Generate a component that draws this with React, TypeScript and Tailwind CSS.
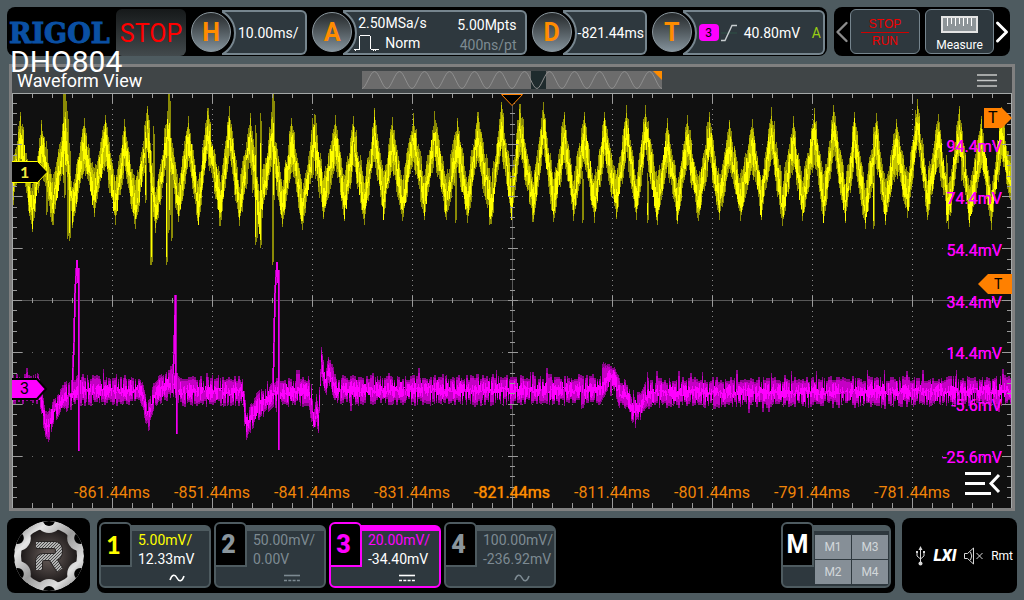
import React, { useState } from "react";
import clsx from "clsx";
import { LuChevronLeft, LuChevronRight } from "react-icons/lu";

type Point = [number, number];
type Span = [number, number, number];

const PLOT_W = 1000;
const PLOT_H = 415;
const DIV_Y = PLOT_H / 8;

const timeLabels = [
  "-861.44ms",
  "-851.44ms",
  "-841.44ms",
  "-831.44ms",
  "-821.44ms",
  "-811.44ms",
  "-801.44ms",
  "-791.44ms",
  "-781.44ms",
];

const voltLabels = [
  "94.4mV",
  "74.4mV",
  "54.4mV",
  "34.4mV",
  "14.4mV",
  "-5.6mV",
  "-25.6mV",
];

// turning points of channel 1: crest, trough, crest, ...
const ch1Turns: Point[] = [
  [0, 117], [8, 19], [20, 139], [29, 27], [40, 132], [53, 17], [60, 135],
  [72, 25], [82, 124], [93, 22], [103, 132], [112, 26], [123, 136], [135, 13],
  [143, 140], [155, 18], [166, 129], [176, 23], [186, 132], [195, 15],
  [208, 133], [217, 13], [227, 133], [238, 20], [247, 140], [260, 19],
  [270, 134], [279, 25], [290, 137], [302, 21], [311, 126], [323, 22],
  [332, 128], [341, 23], [352, 132], [362, 15], [371, 127], [380, 24],
  [390, 128], [401, 20], [412, 127], [422, 18], [434, 127], [445, 25],
  [455, 130], [465, 19], [479, 131], [489, 9], [499, 127], [507, 11],
  [521, 129], [531, 9], [541, 129], [552, 19], [561, 128], [572, 19],
  [582, 130], [592, 19], [604, 126], [614, 12], [624, 127], [633, 12],
  [645, 132], [655, 25], [665, 131], [675, 22], [686, 128], [697, 19],
  [707, 127], [717, 27], [728, 128], [740, 26], [749, 127], [759, 14],
  [770, 133], [781, 23], [790, 128], [802, 15], [811, 130], [821, 12],
  [833, 130], [842, 19], [853, 136], [864, 20], [873, 132], [884, 26],
  [895, 125], [905, 6], [915, 127], [926, 21], [936, 136], [947, 13],
  [957, 134], [969, 23], [979, 137], [989, 14], [1000, 122],
];

// narrow bursts on top of channel 1
const ch1Bursts: Span[] = [
  [51, 0, 90], [52, 0, 105], [53, 0, 80], [55, 18, 146], [57, 50, 148],
  [34, 48, 122], [133, 42, 110], [138, 50, 172], [139, 70, 172],
  [141, 33, 120], [154, 60, 172], [156, 0, 140], [157, 0, 125],
  [159, 70, 148], [212, 60, 98], [240, 38, 100], [243, 32, 152],
  [244, 90, 148], [248, 20, 155], [260, 0, 172], [261, 0, 110],
  [300, 25, 85], [303, 22, 86], [443, 70, 130], [477, 75, 132],
  [570, 78, 130], [635, 80, 130], [801, 28, 75], [861, 60, 136],
  [949, 30, 88], [934, 62, 130],
];

const ch3Center: Point[] = [
  [0, 297], [26, 295], [29, 308], [33, 332], [36, 334], [42, 317], [50, 306],
  [58, 301], [66, 297], [128, 297], [131, 306], [134, 320], [138, 316],
  [142, 302], [150, 294], [160, 290], [168, 298], [228, 298], [231, 304],
  [234, 332], [238, 325], [246, 313], [256, 305], [262, 300], [296, 298],
  [299, 310], [302, 330], [304, 316], [306, 330], [308, 290], [309, 268],
  [312, 285], [314, 289], [316, 276], [319, 286], [322, 297], [588, 297],
  [595, 285], [601, 286], [607, 300], [615, 303], [620, 318], [628, 312],
  [636, 300], [1000, 298],
];

const ch3Spikes = [
  "M60 300L62 250L63 200L65 167V190M66.5 175V358",
  "M160 300L162 262L163.5 202V300M164.5 280V341",
  "M261 300L262 250L263 200L265 169V190M266.5 177V357",
];

const noise = (n: number) => {
  const v = Math.sin(n * 127.1 + 11.7) * 43758.5453;
  return v - Math.floor(v);
};

const bar = (x: number, a: number, b: number) =>
  `M${x + 0.5} ${a.toFixed(1)}V${b.toFixed(1)}`;

const buildCh1 = () => {
  const dim: string[] = [];
  const mid: string[] = [];
  const hot: string[] = [];
  let k = 0;
  for (let x = 0; x < PLOT_W; x++) {
    while (k < ch1Turns.length - 2 && x >= ch1Turns[k + 1][0]) k++;
    const [xa, ya] = ch1Turns[k];
    const [xb, yb] = ch1Turns[k + 1];
    const ca = ya < 80 ? ya + 22 : ya - 19;
    const cb = yb < 80 ? yb + 22 : yb - 19;
    const t = (x - xa) / (xb - xa);
    const c = ca + (cb - ca) * t;
    // 0 on a crest, 1 in a trough
    const depth = ya < 80 ? t : 1 - t;
    const nearest = t < 0.5 ? ya : yb;
    const edge = Math.min(t, 1 - t);
    let up = 18 + depth * 13 - noise((x >> 1) + 20) * 12;
    let down = 34 - depth * 13 - noise((x >> 1) + 900) * 12;
    if (edge < 0.3) {
      // the band fills out towards each turning point
      const reach = edge < 0.08 ? 0 : 3 + edge * 40 + noise(x >> 1) * 8;
      if (nearest < 80) up = Math.max(up, c - nearest - reach);
      else down = Math.max(down, nearest - c - reach);
      if (nearest < 80) up = Math.min(up, c - nearest);
      else down = Math.min(down, nearest - c);
    }
    dim.push(bar(x, c - up, c + down));
    if (noise(x + 40) > 0.1) {
      const cut = 2 + noise(x + 70) * 8;
      mid.push(bar(x, c - up + cut, c + down - cut));
    }
    const shift = (noise(x + 500) - 0.5) * 14 + 2;
    const core = 2 + noise(x + 300) * 11;
    hot.push(bar(x, c + shift - core, c + shift + core));
  }
  ch1Bursts.forEach(([x, a, b], i) => {
    dim.push(`M${x} ${a}V${b}`, `M${x + 1} ${a + 8}V${b - 3}`);
    if (i % 2 === 0) hot.push(`M${x + 0.5} ${a + 30}V${b - 8}`);
  });
  return { dim: dim.join(""), mid: mid.join(""), hot: hot.join("") };
};

const buildCh3 = () => {
  const dim: string[] = [];
  const mid: string[] = [];
  const hot: string[] = [];
  let k = 0;
  for (let x = 0; x < PLOT_W; x++) {
    while (k < ch3Center.length - 2 && x >= ch3Center[k + 1][0]) k++;
    const [xa, ya] = ch3Center[k];
    const [xb, yb] = ch3Center[k + 1];
    const c = ya + ((yb - ya) * (x - xa)) / (xb - xa);
    const pick = noise(x + 150);
    let up = 10 + noise((x >> 1) + 77) * 6;
    let down = 9 + noise((x >> 1) + 400) * 7;
    if (noise((x >> 1) + 50) > 0.92) up += 7;
    if (noise((x >> 1) + 61) > 0.94) down += 5;
    // quiet columns leave gaps on one side of the band
    if (pick < 0.16) up = 1;
    else if (pick > 0.84) down = 2;
    dim.push(bar(x, c - up, c + down));
    mid.push(bar(x, c - up * 0.8, c + down * 0.8));
    const core = noise(x + 600) * 8;
    const shift = (noise(x + 830) - 0.5) * 6;
    hot.push(bar(x, c + shift - core, c + shift + core));
  }
  return { dim: dim.join(""), mid: mid.join(""), hot: hot.join("") };
};

const buildGrid = () => {
  const ticks: string[] = [];
  for (let x = 20; x < PLOT_W; x += 20) {
    const len = x % 100 === 0 ? 10 : 5;
    ticks.push(
      `M${x + 0.5} 0v${len}`,
      `M${x + 0.5} ${PLOT_H}v${-len}`,
      `M${x + 0.5} ${207.5 - len / 2}v${len}`
    );
  }
  for (let i = 1; i < 40; i++) {
    const y = Math.floor((i * DIV_Y) / 5) + 0.5;
    const len = i % 5 === 0 ? 10 : 5;
    ticks.push(
      `M0 ${y}h${len}`,
      `M${PLOT_W} ${y}h${-len}`,
      `M${500.5 - len / 2} ${y}h${len}`
    );
  }
  return ticks.join("");
};

const ch1 = buildCh1();
const ch3 = buildCh3();
const gridTicks = buildGrid();

const Graticule = () => (
  <svg
    className="absolute inset-0 h-full w-full"
    viewBox={`0 0 ${PLOT_W} ${PLOT_H}`}
    preserveAspectRatio="none"
    shapeRendering="crispEdges"
    fill="none"
  >
    {[1, 2, 3, 4, 6, 7, 8, 9].map((i) => (
      <path
        key={`v${i}`}
        d={`M${i * 100 + 0.5} 0V${PLOT_H}`}
        stroke="#8a8a8a"
        strokeDasharray={`1 ${DIV_Y / 10 - 1}`}
      />
    ))}
    {[1, 2, 3, 5, 6, 7].map((i) => (
      <path
        key={`h${i}`}
        d={`M0 ${Math.floor(i * DIV_Y) + 0.5}H${PLOT_W}`}
        stroke="#6c6c6c"
        strokeDasharray="1 9"
      />
    ))}
    <path d={`M0 207.5H${PLOT_W}M500.5 0V${PLOT_H}`} stroke="#585858" />
    <path d={ch1.dim} stroke="#8a8a06" />
    <path d={ch1.mid} stroke="#c6c600" />
    <path d={ch1.hot} stroke="#ffff00" />
    <path d={ch3.dim} stroke="#8a068a" />
    <path d={ch3.mid} stroke="#c400c4" />
    <path d={ch3.hot} stroke="#ff00ff" />
    {ch3Spikes.map((d) => (
      <g key={d}>
        <path d={d} stroke="#b000b0" strokeWidth="2" />
        <path d={d} stroke="#f000f0" />
      </g>
    ))}
    <path d={gridTicks} stroke="#9a9a9a" />
    <path d="M0 0.5H1000M0.5 0V415M999.5 0V415" stroke="#a4a8a8" />
  </svg>
);

interface ReadoutProps {
  letter: string;
  label: string;
  className: string;
  children: React.ReactNode;
}

const Readout = ({ letter, label, className, children }: ReadoutProps) => (
  <button
    aria-label={label}
    className={clsx("flex min-w-0 items-center pt-px text-left", className)}
  >
    <span className="z-10 -mr-[9px] flex size-10 shrink-0 items-center justify-center rounded-full border border-[#8b979e] bg-linear-to-b from-[#262a2c] to-[#84929b] pt-[2px] text-[25px] font-bold text-[#ff8c00]">
      {letter}
    </span>
    <span className="relative flex h-[45px] min-w-0 flex-1 items-center overflow-hidden rounded-r-md border-2 border-l-0 border-[#76858e] bg-[#2e383e]">
      <span className="absolute -left-9 -top-1 size-[50px] rounded-full border-2 border-[#76858e] bg-black" />
      {children}
    </span>
  </button>
);

const Coupling = ({ type }: { type: string }) =>
  type === "AC" ? (
    <svg width="16" height="8" viewBox="0 0 16 8" fill="none">
      <path
        d="M1 6C3 0 6 0 8 4S13 8 15 2"
        stroke="currentColor"
        strokeWidth="1.6"
      />
    </svg>
  ) : (
    <svg width="16" height="8" viewBox="0 0 16 8" fill="none">
      <path d="M0 1.5h16" stroke="currentColor" strokeWidth="1.6" />
      <path
        d="M0 6.5h16"
        stroke="currentColor"
        strokeWidth="1.6"
        strokeDasharray="3 1.3"
      />
    </svg>
  );

const channels = [
  { id: 1, scale: "5.00mV/", offset: "12.33mV", coupling: "AC", on: true },
  { id: 2, scale: "50.00mV/", offset: "0.00V", coupling: "DC", on: false },
  { id: 3, scale: "20.00mV/", offset: "-34.40mV", coupling: "DC", on: true },
  { id: 4, scale: "100.00mV/", offset: "-236.92mV", coupling: "AC", on: false },
];

const RigolGear = () => (
  <svg width="70" height="70" viewBox="-35 -35 70 70">
    <defs>
      <linearGradient
        id="metal"
        gradientUnits="userSpaceOnUse"
        x1="-30"
        y1="-30"
        x2="30"
        y2="30"
      >
        <stop offset="0" stopColor="#8e8e8e" />
        <stop offset="0.2" stopColor="#e6e6e6" />
        <stop offset="0.5" stopColor="#9a9a9a" />
        <stop offset="0.8" stopColor="#e0e0e0" />
        <stop offset="1" stopColor="#8c8c8c" />
      </linearGradient>
      <radialGradient id="core">
        <stop offset="0" stopColor="#6a5f5c" />
        <stop offset="1" stopColor="#1e1a1a" />
      </radialGradient>
      <pattern id="mesh" width="3" height="3" patternUnits="userSpaceOnUse">
        <rect width="3" height="3" fill="#b4b4b4" />
        <path d="M0 3L3 0" stroke="#4a4a4a" />
      </pattern>
      <clipPath id="disc">
        <circle r="35" />
      </clipPath>
    </defs>
    <g clipPath="url(#disc)">
      <circle r="35" fill="url(#metal)" />
      <circle r="28" fill="url(#core)" />
      {[30, 90, 150, 210, 270, 330].map((a) => {
        const r = (a * Math.PI) / 180;
        const cx = 36 * Math.cos(r);
        const cy = 36 * Math.sin(r);
        return (
          <g key={a}>
            <circle cx={cx} cy={cy} r="13" fill="url(#metal)" />
            <circle cx={cx} cy={cy} r="6" fill="#000" />
          </g>
        );
      })}
    </g>
    <path
      d="M-13 -11H5Q10 -11 10 -5Q10 1 5 1H-5Q-10 1 -10 6V14M3 2L11 14"
      fill="none"
      stroke="#2a2626"
      strokeWidth="8"
    />
    <path
      d="M-13 -11H5Q10 -11 10 -5Q10 1 5 1H-5Q-10 1 -10 6V14M3 2L11 14"
      fill="none"
      stroke="url(#mesh)"
      strokeWidth="6"
    />
  </svg>
);

const App = () => {
  const [selected, setselected] = useState(3);

  return (
    <div className="flex min-h-screen flex-col bg-[#4e5b60] px-[7px] py-[7px] font-[Roboto,sans-serif] text-white">
      <header className="mr-[7px] flex gap-[7px]">
        <div className="relative flex h-[49px] min-w-0 flex-1 items-center gap-[5px] rounded-lg bg-black pl-[2px] pr-[2px]">
          <h1 className="w-[102px] shrink-0 pt-1 font-['DejaVu_Serif',serif] text-[27px] font-bold leading-none text-[#0a50a4] [-webkit-text-stroke:1px_#0a50a4]">
            RIGOL
          </h1>
          <p className="absolute left-[3px] top-[39px] z-20 text-[30px] leading-8">
            DHO804
          </p>
          <button className="mt-[2px] h-[47px] w-[70px] shrink-0 rounded-md bg-linear-to-b from-[#16191a] to-[#434a4d] pt-[2px] text-[25px] text-[#ff0000]">
            STOP
          </button>

          <Readout
            letter="H"
            label="Horizontal"
            className="flex-[116_1_116px]"
          >
            <span className="pl-4 pt-px text-sm">10.00ms/</span>
          </Readout>

          <Readout
            letter="A"
            label="Acquire"
            className="flex-[214_1_214px]"
          >
            <span className="relative flex h-full flex-1 justify-between pl-2 pr-2 text-sm leading-5">
              <span className="pt-px">
                <span className="block pl-[7px]">2.50MSa/s</span>
                <span className="flex items-center gap-[6px]">
                  <svg
                    width="28"
                    height="16"
                    viewBox="0 0 28 16"
                    fill="none"
                    stroke="#fff"
                    shapeRendering="crispEdges"
                  >
                    <path d="M3 14.5h6M8.5 14V1M9 0.5h10M19.5 1V14M20 14.5h8" />
                    <path d="M4 15.5h2M22 15.5h3" strokeDasharray="1 1" />
                  </svg>
                  Norm
                </span>
              </span>
              <span className="pt-[3px] text-right">
                <span className="block">5.00Mpts</span>
                <span className="block text-[#7d8a92]">400ns/pt</span>
              </span>
            </span>
          </Readout>

          <Readout letter="D" label="Delay" className="flex-[115_1_115px]">
            <span className="relative pl-[15px] pt-px text-sm">-821.44ms</span>
          </Readout>

          <Readout letter="T" label="Trigger" className="flex-[173_1_173px]">
            <span className="relative flex flex-1 items-center pl-4 pr-[2px] pt-px text-sm">
              <span className="flex h-[17px] w-5 items-center justify-center rounded bg-[#ff00ff] text-xs text-black">
                3
              </span>
              <svg
                className="ml-[2px]"
                width="16"
                height="18"
                viewBox="0 0 16 18"
                fill="none"
              >
                <path d="M0 9h16" stroke="#2d5045" />
                <path d="M0 16.5H4L11 1.5H16" stroke="#c8cdd0" strokeWidth="1.4" />
              </svg>
              <span className="ml-[7px]">40.80mV</span>
              <span className="ml-auto text-[#9acd14]">A</span>
            </span>
          </Readout>
        </div>

        <div className="flex h-[49px] w-44 shrink-0 items-center gap-[5px] rounded-lg bg-black">
          <button aria-label="Previous" className="-mr-[5px] w-4 text-[#8c8c8c]">
            <LuChevronLeft
              className="-ml-1 size-6"
              viewBox="4 4 16 16"
              strokeWidth={1.6}
            />
          </button>
          <button className="h-[45px] w-[70px] rounded-md border border-[#76858e] bg-[#2e383e] pt-[2px] font-['Liberation_Sans',sans-serif] text-xs text-[#f00000]">
            <span className="block leading-4">STOP</span>
            <span className="mx-[10px] block h-px bg-[#d00000]" />
            <span className="block leading-4">RUN</span>
          </button>
          <button className="flex h-[45px] w-[69px] flex-col items-center justify-end gap-1 rounded-md border border-[#76858e] bg-[#2e383e] text-xs leading-4">
            <svg width="37" height="17" viewBox="0 0 37 17" fill="none">
              <path
                d="M1 1H36V16H1Z"
                fill="#8d9498"
                stroke="#e4e4e4"
                strokeWidth="2"
              />
              <path
                d="M6.5 2v8M10.5 2v6M14.5 2v8M18.5 2v6M22.5 2v8M26.5 2v6M30.5 2v8"
                stroke="#fff"
              />
            </svg>
            Measure
          </button>
          <button aria-label="Next" className="-ml-[5px] w-4">
            <LuChevronRight className="-ml-1 size-6" viewBox="4 4 16 16" />
          </button>
        </div>
      </header>

      <main className="mx-[2px] mt-2 flex flex-1 flex-col border-[3px] border-[#808080]">
        <div className="grid h-[26px] grid-cols-[1fr_auto_1fr] items-center bg-[#404547]">
          <h2 className="pl-[5px] pt-[2px] text-lg leading-5">Waveform View</h2>
          <svg width="300" height="18" viewBox="0 0 300 18" fill="none">
            <path d="M0 0H300V18H0Z" fill="#6c6c6c" />
            <path d="M169 0H184V18H169Z" fill="#1f2b2d" />
            <path
              d={Array.from(
                { length: 12 },
                (_, i) => `M${i * 25} 17.5c4 0 8 -17 12.5 -17s8 17 12.5 17`
              ).join("")}
              stroke="#8f8f8f"
            />
            <path d="M291 0H300V9Z" fill="#ff8c00" />
          </svg>
          <button aria-label="View menu" className="mr-[15px] justify-self-end">
            <svg width="20" height="14" viewBox="0 0 20 14" fill="none">
              <path d="M0 2h20M0 7.5h20M0 13h20" stroke="#c6c8c8" strokeWidth="1.5" />
            </svg>
          </button>
        </div>

        <div className="relative min-h-[320px] flex-1 bg-[#101010]">
          <Graticule />

          {/* trigger position */}
          <svg
            className="absolute left-1/2 top-0 -translate-x-1/2"
            width="24"
            height="14"
            viewBox="0 0 24 14"
          >
            <path d="M1.5 1.5H22.5L12 12.5Z" fill="#000" stroke="#ff8000" />
          </svg>

          {/* channel ground markers */}
          <div className="absolute left-0 top-[19%] h-[22px] w-9 -translate-y-1/2">
            <svg className="absolute inset-0" width="36" height="22" viewBox="0 0 36 22">
              <path d="M0 0.5H25.5L35.5 11L25.5 21.5H0" fill="#000" stroke="#ffff00" />
            </svg>
            <span className="relative block pl-2 font-[Lato,sans-serif] text-base font-bold leading-[22px] text-[#f0e83c]">
              1
            </span>
          </div>
          <div className="absolute left-0 top-[71%] h-6 w-9 -translate-y-1/2">
            <svg className="absolute inset-0" width="36" height="24" viewBox="0 0 36 24">
              <path d="M0 3H25L34 13L25 23H0" fill="#ff00ff" stroke="#000" strokeWidth="2" />
            </svg>
            <span className="relative block pl-2 pt-[2px] text-base leading-[22px] text-black">
              3
            </span>
          </div>

          <div className="absolute inset-y-0 right-[10px] flex flex-col pb-6 pt-7 text-right text-base text-[#ff00ff] [text-shadow:0_0_0_currentColor]">
            {voltLabels.map((label) => (
              <span key={label} className="flex flex-1 items-center justify-end">
                {label}
              </span>
            ))}
          </div>

          {/* trigger markers on the right edge */}
          <div className="absolute right-0 top-[6%] h-5 w-7 -translate-y-1/2">
            <svg className="absolute inset-0" width="28" height="20" viewBox="0 0 28 20">
              <path d="M0 0H18L28 10L18 20H0Z" fill="#ff8000" />
            </svg>
            <span className="relative block pl-1 text-base leading-5 text-black">
              T
            </span>
          </div>
          <div className="absolute right-0 top-[46%] h-5 w-[34px] -translate-y-1/2">
            <svg className="absolute inset-0" width="34" height="20" viewBox="0 0 34 20">
              <path d="M34 0H10L0 10L10 20H34Z" fill="#ff8000" />
            </svg>
            <span className="relative block pl-4 text-sm leading-5 text-black">
              T
            </span>
          </div>

          <div className="absolute inset-x-0 bottom-1 grid grid-cols-9 px-[5%] text-center text-base leading-[22px] text-[#f08408]">
            {timeLabels.map((label, i) => (
              <span
                key={label}
                className={clsx(
                  i === 4 && "text-[#ff8c00] [text-shadow:0_0_1px_currentColor]"
                )}
              >
                {label}
              </span>
            ))}
          </div>

          <button aria-label="Expand list" className="absolute bottom-3 right-[11px]">
            <svg width="36" height="25" viewBox="0 0 36 25" fill="none" stroke="#fff">
              <path d="M0 2.5h26M0 12.5h20M0 22.5h26" strokeWidth="3" />
              <path d="M34 4L26 12.5L34 21" strokeWidth="3" />
            </svg>
          </button>
        </div>
      </main>

      <footer className="mt-[7px] flex h-[75px] gap-[7px]">
        <button
          aria-label="Main menu"
          className="flex w-[83px] shrink-0 items-center justify-center rounded-lg bg-black"
        >
          <RigolGear />
        </button>

        <div className="flex min-w-0 flex-1 gap-[3px] rounded-lg bg-black pb-[5px] pl-[2px] pr-1 pt-[7px]">
          {channels.map((ch) => {
            const active = selected === ch.id;
            return (
              <button
                key={ch.id}
                aria-pressed={active}
                onClick={() => setselected(ch.id)}
                className={clsx(
                  "relative w-28 rounded-md border-2 border-t-[6px] bg-[#2e383e] pl-[37px] text-left text-sm leading-[19px]",
                  active ? "border-[#ff00ff]" : "border-[#4e5b60]",
                  !ch.on && "text-[#7d8a92]"
                )}
              >
                <span
                  className={clsx(
                    "absolute -left-[2px] -top-[9px] flex h-[45px] w-[33px] items-center justify-center rounded-t-md border-2 bg-black pr-1 text-[25px] font-black",
                    active ? "border-[#ff00ff]" : "border-[#4e5b60]",
                    ch.id === 1 && "font-[Lato,sans-serif] text-[#ffff00]",
                    ch.id === 3 && "text-[#ff00ff]",
                    !ch.on && "text-[#8a959c]"
                  )}
                >
                  {ch.id}
                </span>
                <span
                  className={clsx(
                    "block",
                    ch.id === 1 && "text-[#ffff00]",
                    ch.id === 3 && "text-[#ff00ff]"
                  )}
                >
                  {ch.scale}
                </span>
                <span className="block">{ch.offset}</span>
                <span className="flex h-[17px] items-center pl-[31px]">
                  <Coupling type={ch.coupling} />
                </span>
              </button>
            );
          })}

          <div className="relative ml-auto w-[110px] rounded-md border-2 border-t-[6px] border-[#4e5b60] bg-[#2e383e]">
            <span className="absolute -left-[2px] -top-[9px] flex h-[45px] w-[33px] items-center justify-center rounded-t-md border-2 border-[#4e5b60] bg-black text-[25px] font-bold">
              M
            </span>
            <div className="ml-8 mr-px mt-1 grid grid-cols-2 gap-px text-xs text-[#d2d7da]">
              {["M1", "M3", "M2", "M4"].map((m) => (
                <button key={m} className="h-6 bg-[#868f97]">
                  {m}
                </button>
              ))}
            </div>
          </div>
        </div>

        <div className="flex w-[115px] shrink-0 items-center justify-between rounded-lg bg-black pl-[13px] pr-1">
          <svg width="11" height="20" viewBox="0 0 11 20" fill="none" stroke="#d8d8d8">
            <path d="M5.5 3V17M2 7V10L5.5 13M9 7V10L5.5 13" />
            <path d="M5.5 0L7.5 4H3.5Z" fill="#d8d8d8" stroke="none" />
            <path d="M1 5H3V7H1ZM8 5H10V7H8Z" fill="#d8d8d8" stroke="none" />
            <circle cx="5.5" cy="17.5" r="2" fill="#d8d8d8" stroke="none" />
          </svg>
          <span className="text-base font-black italic">LXI</span>
          <svg width="20" height="18" viewBox="0 0 20 18" fill="none" stroke="#d8d8d8">
            <path d="M0.5 6.5H3.5L9.5 1V17L3.5 11.5H0.5Z" />
            <path d="M6.5 5Q9 9 6.5 13M12.5 6L18.5 12M18.5 6L12.5 12" />
          </svg>
          <span className="text-xs">Rmt</span>
        </div>
      </footer>
    </div>
  );
};

export default App;
